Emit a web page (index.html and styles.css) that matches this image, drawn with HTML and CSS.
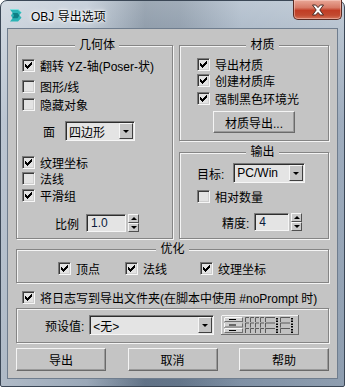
FILE: index.html
```html
<!DOCTYPE html>
<html>
<head>
<meta charset="utf-8">
<title>OBJ 导出选项</title>
<link rel="stylesheet" href="styles.css">
</head>
<body>
<div class="window">
  <div class="titlebar">
    <svg class="appicon" width="14" height="15" viewBox="0 0 14 15">
      <path d="M1 1.5h8l3.5 3-2.2 2.6 2.2 2.6-3.5 3.8H1l2.5-3.3L2 7.5l1.6-2.6z" fill="#2bb3b5"/>
      <path d="M3.6 4.9 5 7.5 3.5 10.2h5l1.8-2.7-1.8-2.6z" fill="#0f7f86"/>
      <path d="M1 1.5h8l3.5 3" fill="none" stroke="#7fe0df" stroke-width="1"/>
    </svg>
    <span class="title">OBJ 导出选项</span>
    <div class="close">
      <svg width="16" height="12" viewBox="0 0 16 12"><path d="M2.5 1h3.2L8 3.6 10.3 1h3.2L9.8 6l3.7 5h-3.2L8 8.4 5.7 11H2.5l3.7-5z" fill="#fff" stroke="#4a2a24" stroke-width="1"/></svg>
    </div>
  </div>
  <div class="client">
    <div class="top">
      <fieldset class="group geo">
        <legend>几何体</legend>
        <div class="row g1"><span class="cb"><svg class="chk" width="7" height="7" viewBox="0 0 7 7"><path d="M0 2h1v3H0zM1 3h1v3H1zM2 4h1v3H2zM3 3h1v3H3zM4 2h1v3H4zM5 1h1v3H5zM6 0h1v3H6z"/></svg></span>翻转 YZ-轴(Poser-状)</div>
        <div class="row g2"><span class="cb"></span>图形/线</div>
        <div class="row g3"><span class="cb"></span>隐藏对象</div>
        <div class="row tall g-face"><span class="lbl face">面</span>
          <div class="select w70"><span class="val">四边形</span><span class="drop"><i></i></span></div>
        </div>
        <div class="row g4"><span class="cb"><svg class="chk" width="7" height="7" viewBox="0 0 7 7"><path d="M0 2h1v3H0zM1 3h1v3H1zM2 4h1v3H2zM3 3h1v3H3zM4 2h1v3H4zM5 1h1v3H5zM6 0h1v3H6z"/></svg></span>纹理坐标</div>
        <div class="row g5"><span class="cb"></span>法线</div>
        <div class="row g6"><span class="cb"><svg class="chk" width="7" height="7" viewBox="0 0 7 7"><path d="M0 2h1v3H0zM1 3h1v3H1zM2 4h1v3H2zM3 3h1v3H3zM4 2h1v3H4zM5 1h1v3H5zM6 0h1v3H6z"/></svg></span>平滑组</div>
        <div class="row spinrow g-scale"><span class="lbl scale">比例</span>
          <div class="spin"><span class="field w40">1.0</span><span class="arrows"><span class="ab"><i class="up"></i></span><span class="ab"><i class="dn"></i></span></span></div>
        </div>
      </fieldset>
      <div class="rightcol">
        <fieldset class="group mat">
          <legend>材质</legend>
          <div class="row m1"><span class="cb"><svg class="chk" width="7" height="7" viewBox="0 0 7 7"><path d="M0 2h1v3H0zM1 3h1v3H1zM2 4h1v3H2zM3 3h1v3H3zM4 2h1v3H4zM5 1h1v3H5zM6 0h1v3H6z"/></svg></span>导出材质</div>
          <div class="row m2"><span class="cb"><svg class="chk" width="7" height="7" viewBox="0 0 7 7"><path d="M0 2h1v3H0zM1 3h1v3H1zM2 4h1v3H2zM3 3h1v3H3zM4 2h1v3H4zM5 1h1v3H5zM6 0h1v3H6z"/></svg></span>创建材质库</div>
          <div class="row m3"><span class="cb"><svg class="chk" width="7" height="7" viewBox="0 0 7 7"><path d="M0 2h1v3H0zM1 3h1v3H1zM2 4h1v3H2zM3 3h1v3H3zM4 2h1v3H4zM5 1h1v3H5zM6 0h1v3H6z"/></svg></span>强制黑色环境光</div>
          <div class="btn matbtn">材质导出...</div>
        </fieldset>
        <fieldset class="group out">
          <legend>输出</legend>
          <div class="row tall o1"><span class="lbl">目标:</span>
            <div class="select w72"><span class="val">PC/Win</span><span class="drop"><i></i></span></div>
          </div>
          <div class="row o2"><span class="cb"></span>相对数量</div>
          <div class="row spinrow o3"><span class="lbl prec">精度:</span>
            <div class="spin"><span class="field w35">4</span><span class="arrows"><span class="ab"><i class="up"></i></span><span class="ab"><i class="dn"></i></span></span></div>
          </div>
        </fieldset>
      </div>
    </div>
    <fieldset class="group opt">
      <legend>优化</legend>
      <div class="row optrow">
        <span class="item i1"><span class="cb"><svg class="chk" width="7" height="7" viewBox="0 0 7 7"><path d="M0 2h1v3H0zM1 3h1v3H1zM2 4h1v3H2zM3 3h1v3H3zM4 2h1v3H4zM5 1h1v3H5zM6 0h1v3H6z"/></svg></span>顶点</span>
        <span class="item i2"><span class="cb"><svg class="chk" width="7" height="7" viewBox="0 0 7 7"><path d="M0 2h1v3H0zM1 3h1v3H1zM2 4h1v3H2zM3 3h1v3H3zM4 2h1v3H4zM5 1h1v3H5zM6 0h1v3H6z"/></svg></span>法线</span>
        <span class="item i3"><span class="cb"><svg class="chk" width="7" height="7" viewBox="0 0 7 7"><path d="M0 2h1v3H0zM1 3h1v3H1zM2 4h1v3H2zM3 3h1v3H3zM4 2h1v3H4zM5 1h1v3H5zM6 0h1v3H6z"/></svg></span>纹理坐标</span>
      </div>
    </fieldset>
    <div class="row logrow"><span class="cb"><svg class="chk" width="7" height="7" viewBox="0 0 7 7"><path d="M0 2h1v3H0zM1 3h1v3H1zM2 4h1v3H2zM3 3h1v3H3zM4 2h1v3H4zM5 1h1v3H5zM6 0h1v3H6z"/></svg></span>将日志写到导出文件夹(在脚本中使用 #noPrompt 时)</div>
    <div class="group preset">
      <div class="row tall presetrow">
        <span class="lbl plabel">预设值:</span>
        <div class="select w125"><span class="val">&lt;无&gt;</span><span class="drop"><i></i></span></div>
        <svg class="pico" width="78" height="20" viewBox="0 0 78 20">
          <rect x="0.5" y="0.5" width="77" height="19" fill="#c2c2c2" stroke="#6e6e6e"/>
          <path d="M0.5 19V0.5H77" fill="none" stroke="#f4f4f4"/>
          <g id="prow">
            <rect x="3.5" y="2.5" width="18" height="4" fill="#d0d0d0" stroke="#707070"/>
            <path d="M3.5 6.5V2.5H21.5" fill="none" stroke="#fafafa"/>
            <path d="M8 4.5h7" stroke="#000"/>
            <path d="M24.5 7V2.5H28M29.5 7V2.5H33M34.5 7V2.5H38M39.5 7V2.5H43M44.5 7V2.5H54M59.5 7V2.5H69" fill="none" stroke="#5a5a5a"/>
            <rect x="55" y="3" width="2" height="1.5" fill="#000"/><rect x="55" y="5.5" width="2" height="1.5" fill="#000"/>
            <rect x="70" y="3" width="2" height="1.5" fill="#000"/><rect x="70" y="5.5" width="2" height="1.5" fill="#000"/>
          </g>
          <use href="#prow" y="5.5"/>
          <use href="#prow" y="11"/>
        </svg>
      </div>
    </div>
    <div class="buttons">
      <div class="btn big">导出</div>
      <div class="btn big">取消</div>
      <div class="btn big">帮助</div>
    </div>
  </div>
</div>
</body>
</html>
```

FILE: styles.css
```css
* { box-sizing: border-box; }
html, body { margin: 0; padding: 0; background: #ffffff; }
body {
  font-family: "Liberation Sans", "Noto Sans CJK SC", sans-serif;
  font-size: 12px;
  color: #000;
}
.window {
  width: 345px;
  height: 387px;
  border: 1px solid #3b4756;
  border-radius: 7px 7px 2px 2px;
  background:
    linear-gradient(90deg, rgba(255,255,255,0.45) 0%, rgba(255,255,255,0.3) 25%, rgba(0,0,0,0.12) 42%, rgba(0,0,0,0.1) 52%, rgba(255,255,255,0.12) 70%, rgba(255,255,255,0.22) 100%),
    linear-gradient(180deg, #b3c0ce 0px, #a4b3c3 30px, #8597ad 120px, #6e8299 387px);
  padding: 0 6px 7px 6px;
  display: flex;
  flex-direction: column;
  position: relative;
}
.titlebar {
  height: 27px;
  display: flex;
  align-items: center;
  padding-left: 2px;
}
.appicon { margin-top: 1px; }
.title {
  margin-left: 8px;
  font-family: "Liberation Sans", "Noto Sans CJK SC", sans-serif;
  font-size: 12px;
  color: #000;
  text-shadow: 0 0 6px #fff, 0 0 3px #fff, 0 0 2px #fff;
  margin-top: 1px;
}
.close {
  position: absolute;
  top: -1px;
  right: 2px;
  width: 49px;
  height: 20px;
  border: 1px solid #5b2b23;
  border-top: none;
  border-radius: 0 0 5px 5px;
  background: linear-gradient(180deg, #e9a898 0%, #d77a66 40%, #c13d25 55%, #c24a30 80%, #d4735a 100%);
  box-shadow: inset 0 0 0 1px rgba(255,220,210,0.45);
  display: flex;
  align-items: center;
  justify-content: center;
}
.client {
  flex: 1;
  background: #c4c4c4;
  border: 1px solid #6f7d8e;
  padding: 9px 8px 7px 8px;
  display: flex;
  flex-direction: column;
}
.top {
  display: flex;
  gap: 6px;
  align-items: flex-start;
}
.rightcol { display: flex; flex-direction: column; width: 150px; }
.group {
  margin: 0;
  padding: 0;
  min-width: 0;
  border: 1px solid #858585;
  box-shadow: 1px 1px 0 #f4f4f4, inset 1px 1px 0 #f4f4f4;
}
.group legend {
  margin: 0 auto;
  padding: 0 4px;
  line-height: 14px;
  height: 14px;
  background: #c4c4c4;
}
.row {
  display: flex;
  align-items: center;
  height: 16px;
  white-space: nowrap;
}
.row.tall { height: 20px; }
.row.spinrow { height: 18px; }
.cb {
  width: 13px;
  height: 13px;
  flex: none;
  margin-right: 5px;
  border: 1px solid;
  border-color: #7a7a7a #f6f6f6 #f6f6f6 #7a7a7a;
  box-shadow: inset 1px 1px 0 #3a3a3a, inset -1px -1px 0 #cfcfcf;
  background: #e3e3e3;
  display: flex;
  align-items: center;
  justify-content: center;
}
.chk { display: block; fill: #000; }

/* geometry group */
.geo { width: 157px; padding: 0 0 6px 5px; height: 201px; }
.g1 { margin-top: 5px; }
.g2 { margin-top: 5px; }
.g3 { margin-top: 2px; }
.g-face { margin-top: 9px; }
.g4 { margin-top: 13px; }
.g5 { margin-top: 0px; }
.g6 { margin-top: 1px; }
.g-scale { margin-top: 11px; }
.lbl { flex: none; }
.face { margin-left: 21px; margin-right: 10px; }
.scale { margin-left: 33px; margin-right: 7px; }

.select {
  height: 20px;
  display: flex;
  align-items: stretch;
  border: 1px solid;
  border-color: #7a7a7a #f6f6f6 #f6f6f6 #7a7a7a;
  box-shadow: inset 1px 1px 0 #2e2e2e;
  background: #e4e4e4;
  padding: 1px 1px 1px 1px;
}
.select .val { flex: 1; padding-left: 2px; display: flex; align-items: center; overflow: hidden; }
.select .drop {
  width: 14px;
  flex: none;
  background: #c4c4c4;
  border: 1px solid;
  border-color: #f6f6f6 #404040 #404040 #f6f6f6;
  display: flex;
  align-items: center;
  justify-content: center;
}
.select .drop i {
  width: 0; height: 0;
  border-left: 3px solid transparent;
  border-right: 3px solid transparent;
  border-top: 3px solid #000;
  margin-top: 1px;
}
.w70 { width: 70px; }
.w72 { width: 72px; }
.w125 { width: 125px; }

.spin { display: flex; height: 18px; gap: 2px; }
.spin .field {
  height: 18px;
  border: 1px solid;
  border-color: #7a7a7a #f6f6f6 #f6f6f6 #7a7a7a;
  box-shadow: inset 1px 1px 0 #2e2e2e;
  background: #e4e4e4;
  padding-left: 4px;
  display: flex;
  align-items: center;
  color: #0a1a3a;
}
.w40 { width: 40px; }
.w35 { width: 35px; }
.spin .arrows { display: flex; flex-direction: column; width: 11px; }
.spin .ab {
  height: 9px;
  background: #cacaca;
  border: 1px solid;
  border-color: #f6f6f6 #505050 #505050 #f6f6f6;
  display: flex;
  align-items: center;
  justify-content: center;
}
.spin .ab i { width: 0; height: 0; border-left: 3px solid transparent; border-right: 3px solid transparent; }
.spin .ab i.up { border-bottom: 3px solid #000; }
.spin .ab i.dn { border-top: 3px solid #000; }

/* material group */
.mat { width: 150px; padding: 0 0 7px 17px; }
.m1 { margin-top: 4px; }
.m2 { margin-top: 0; }
.m3 { margin-top: 2px; }
.btn {
  display: flex;
  align-items: center;
  justify-content: center;
  background: #c4c4c4;
  border: 1px solid;
  border-color: #f4f4f4 #6a6a6a #6a6a6a #f4f4f4;
  box-shadow: inset -1px -1px 0 #9a9a9a;
}
.matbtn { width: 82px; height: 22px; margin-top: 5px; margin-left: 16px; }

/* output group */
.out { width: 150px; margin-top: 4px; padding: 0 0 7px 17px; height: 94px; }
.o1 { margin-top: 4px; }
.o1 .lbl { margin-right: 9px; }
.o2 { margin-top: 5px; }
.o3 { margin-top: 9px; }
.prec { margin-left: 25px; margin-right: 5px; }

/* optimize */
.opt { width: 313px; margin-top: 3px; padding: 0 0 6px 0; }
.optrow { margin-top: 4px; }
.item { display: flex; align-items: center; }
.i1 { margin-left: 41px; }
.i2 { margin-left: 25px; }
.i3 { margin-left: 33px; }

.logrow { margin-top: 6px; padding-left: 6px; }

.preset { width: 313px; margin-top: 3px; padding: 6px 0 7px 0; }
.plabel { margin-left: 28px; margin-right: 5px; }
.pico { margin-left: 7px; display: block; }

.buttons {
  display: flex;
  justify-content: space-between;
  margin-top: 5px;
}
.btn.big { width: 90px; height: 23px; }
```
